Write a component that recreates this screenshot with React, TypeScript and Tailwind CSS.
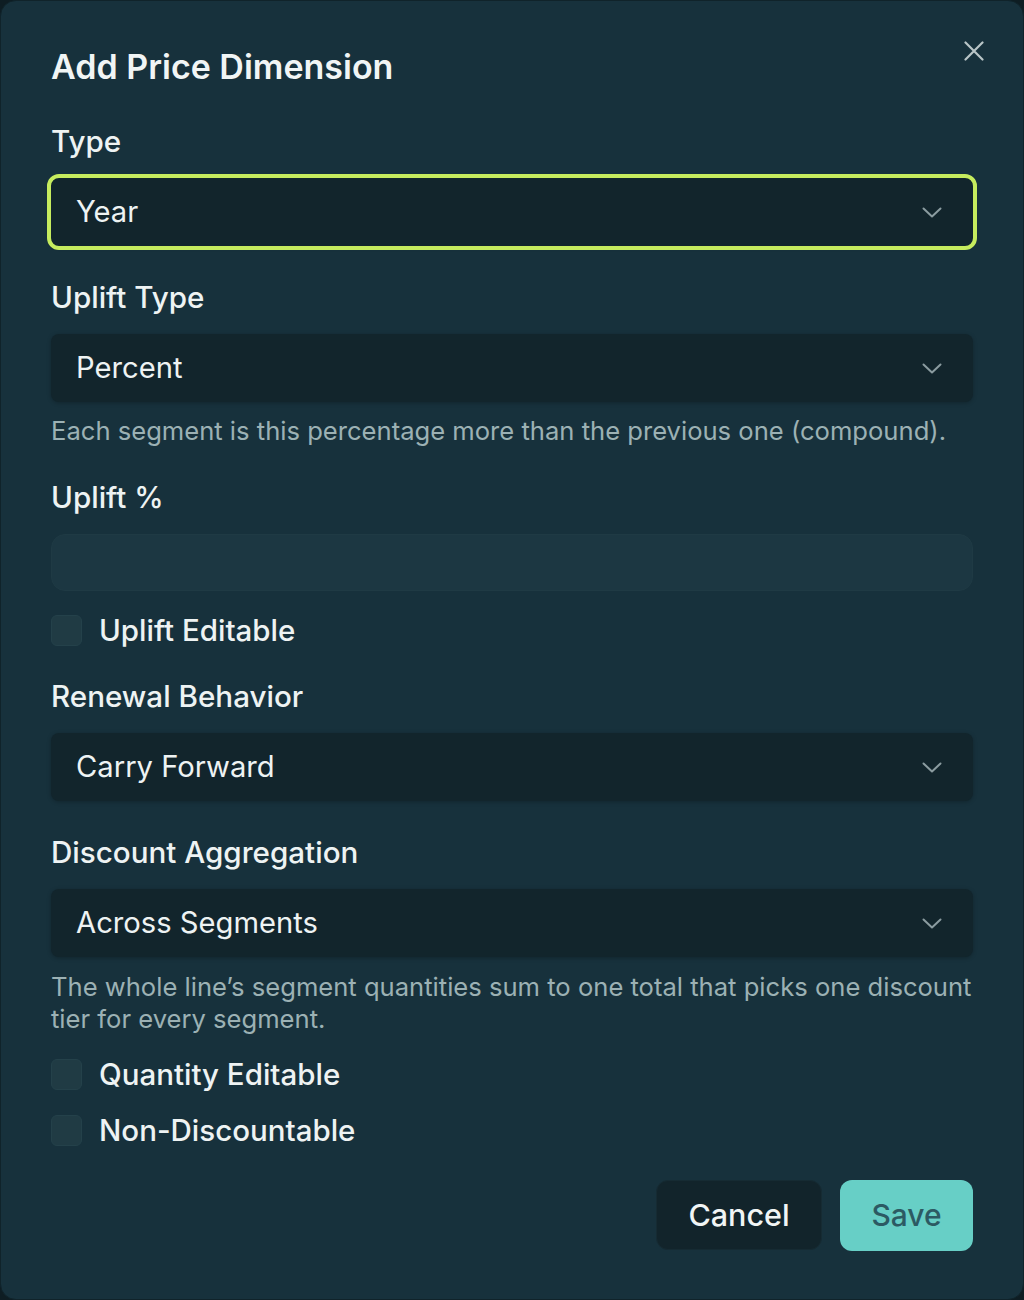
import * as React from 'react'

const font = { fontFamily: 'Inter, "Noto Sans", sans-serif' }

function Chevron() {
  return (
    <svg width="20" height="11" viewBox="0 0 20 11" fill="none" stroke="#8b9ca0" strokeWidth="2" strokeLinecap="round" strokeLinejoin="round">
      <path d="M1.5 1.5l8.5 8 8.5-8" />
    </svg>
  )
}

function Label({ children }: { children: React.ReactNode }) {
  return <div className="text-[29.6px] font-medium leading-[40px] text-[#eef3f3]">{children}</div>
}

function Select({ value, focused }: { value: string; focused?: boolean }) {
  return (
    <div
      className={
        'mt-[17px] flex h-[68px] items-center justify-between rounded-lg bg-[#12252c] pl-[25px] pr-[31px] shadow-[0_1px_4px_rgba(0,0,0,0.25)] ' +
        (focused ? 'outline-[4px] outline-solid outline-[#c6ec5e]' : '')
      }
    >
      <span className="text-[29.2px] leading-[40px] text-[#eef3f3]">{value}</span>
      <Chevron />
    </div>
  )
}

function Helper({ children, className = '' }: { children: React.ReactNode; className?: string }) {
  return <p className={'text-[25.6px] leading-[32px] text-[#9cb1b4] ' + className}>{children}</p>
}

function Check({ label, className = '' }: { label: string; className?: string }) {
  return (
    <label className={'flex h-[40px] items-center gap-[17px] ' + className}>
      <span className="h-[31px] w-[31px] shrink-0 rounded-md border border-[#24414a] bg-[#203b44]" />
      <span className="text-[29.5px] font-medium leading-[40px] text-[#eef3f3]">{label}</span>
    </label>
  )
}

export default function App() {
  return (
    <div className="bg-[#0e1d23]" style={font}>
      <div className="relative h-[1300px] w-[1024px] rounded-2xl border border-[#10232a] bg-[#17313c] px-[50px] pt-[42px]">
        <button className="absolute right-[39px] top-[40px] text-[#b9c5c7]">
          <svg width="20" height="20" viewBox="0 0 20 20" fill="none" stroke="currentColor" strokeWidth="2.2" strokeLinecap="round">
            <path d="M1.5 1.5l17 17M18.5 1.5l-17 17" />
          </svg>
        </button>

        <h2 className="text-[34px] font-semibold leading-[48px] text-[#f1f5f5]">Add Price Dimension</h2>

        <div className="mt-[30px]">
          <Label>Type</Label>
          <Select value="Year" focused />
        </div>

        <div className="mt-[31px]">
          <Label>Uplift Type</Label>
          <Select value="Percent" />
          <Helper className="mt-[13px]">Each segment is this percentage more than the previous one (compound).</Helper>
        </div>

        <div className="mt-[30px]">
          <Label>Uplift %</Label>
          <div className="mt-[17px] h-[57px] rounded-[14px] border border-[#1f3a44] bg-[#1c3742]" />
        </div>

        <Check label="Uplift Editable" className="mt-[19px]" />

        <div className="mt-[26px]">
          <Label>Renewal Behavior</Label>
          <Select value="Carry Forward" />
        </div>

        <div className="mt-[31px]">
          <Label>Discount Aggregation</Label>
          <Select value="Across Segments" />
          <Helper className="mt-[14px]">
            The whole line’s segment quantities sum to one total that picks one discount tier for every segment.
          </Helper>
        </div>

        <Check label="Quantity Editable" className="mt-[19px]" />
        <Check label="Non-Discountable" className="mt-[16px]" />

        <div className="mt-[30px] flex justify-end gap-[18px]">
          <button className="h-[70px] w-[166px] rounded-xl border border-[#162b33] bg-[#12242b] text-[30.5px] font-medium text-[#f1f5f5]">
            Cancel
          </button>
          <button className="h-[71px] w-[133px] rounded-xl bg-[#67cfc6] text-[30px] font-medium text-[#2c5a63]">
            Save
          </button>
        </div>
      </div>
    </div>
  )
}
